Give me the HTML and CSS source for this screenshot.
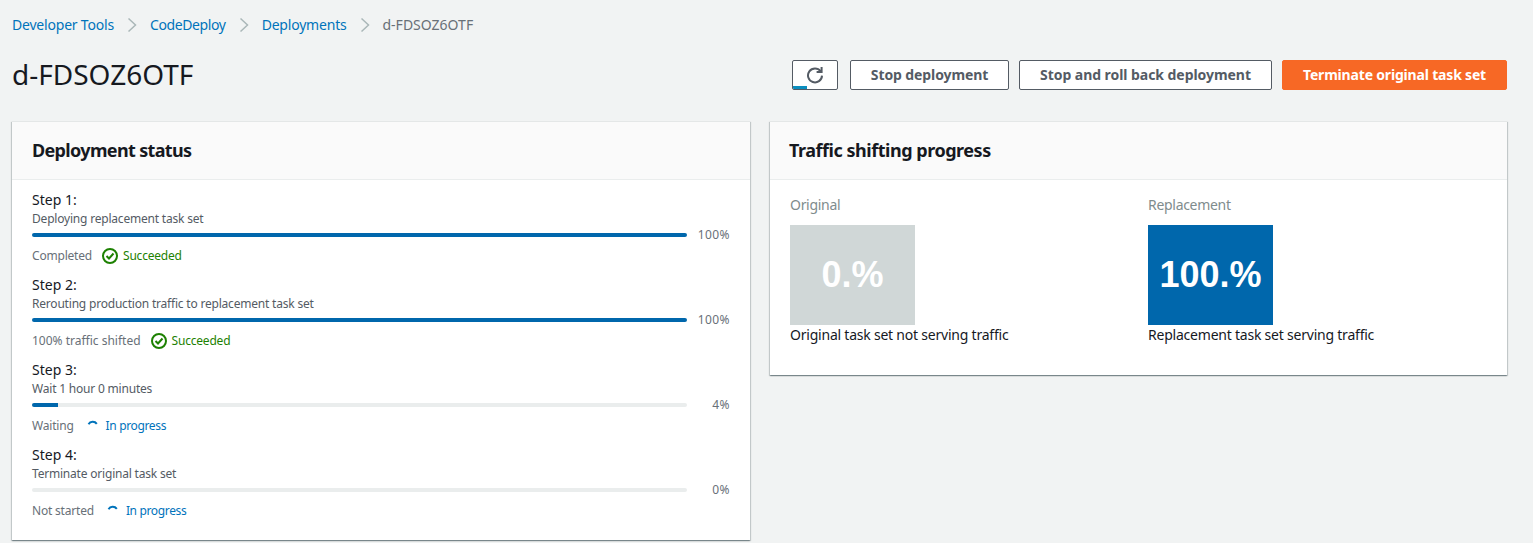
FILE: index.html

```html
<!DOCTYPE html>
<html lang="en">
<head>
    <meta charset="UTF-8">
    <meta name="viewport" content="width=device-width, initial-scale=1.0">
    <title>d-FDSOZ6OTF</title>
    <link rel="stylesheet" href="styles.css">
</head>
<body>
    <nav class="breadcrumbs">
        <a href="#">Developer Tools</a>
        <svg class="crumb-arrow" viewBox="0 0 10 16"><path d="M1.5 1.5 8.5 8l-7 6.5"/></svg>
        <a class="crumb-tight" href="#">CodeDeploy</a>
        <svg class="crumb-arrow" viewBox="0 0 10 16"><path d="M1.5 1.5 8.5 8l-7 6.5"/></svg>
        <a href="#">Deployments</a>
        <svg class="crumb-arrow" viewBox="0 0 10 16"><path d="M1.5 1.5 8.5 8l-7 6.5"/></svg>
        <span class="crumb-current">d-FDSOZ6OTF</span>
    </nav>

    <header class="page-header">
        <h1>d-FDSOZ6OTF</h1>
        <div class="actions">
            <button class="btn btn-refresh" aria-label="Refresh">
                <svg viewBox="0 0 18 18"><path d="M14.6 5.2A7 7 0 1 0 16 9.6"/><path d="M15.6 1v5H10.6"/></svg>
            </button>
            <button class="btn btn-stop">Stop deployment</button>
            <button class="btn btn-rollback">Stop and roll back deployment</button>
            <button class="btn btn-primary">Terminate original task set</button>
        </div>
    </header>

    <main class="columns">
        <section class="card">
            <h2 class="card-header">Deployment status</h2>
            <div class="card-body steps">
                <div class="step">
                    <div class="step-title">Step 1:</div>
                    <div class="step-desc">Deploying replacement task set</div>
                    <div class="progress">
                        <div class="track"><div class="fill" style="width: 100%"></div></div>
                        <span class="percent">100%</span>
                    </div>
                    <div class="status">
                        <span class="status-label">Completed</span>
                        <svg class="icon-ok" viewBox="0 0 16 16"><circle cx="8" cy="8" r="7"/><path d="M4.5 8 7 10.5 11.5 5.5"/></svg>
                        <span class="status-ok">Succeeded</span>
                    </div>
                </div>
                <div class="step">
                    <div class="step-title">Step 2:</div>
                    <div class="step-desc">Rerouting production traffic to replacement task set</div>
                    <div class="progress">
                        <div class="track"><div class="fill" style="width: 100%"></div></div>
                        <span class="percent">100%</span>
                    </div>
                    <div class="status">
                        <span class="status-label status-label-wide">100% traffic shifted</span>
                        <svg class="icon-ok" viewBox="0 0 16 16"><circle cx="8" cy="8" r="7"/><path d="M4.5 8 7 10.5 11.5 5.5"/></svg>
                        <span class="status-ok">Succeeded</span>
                    </div>
                </div>
                <div class="step">
                    <div class="step-title">Step 3:</div>
                    <div class="step-desc">Wait 1 hour 0 minutes</div>
                    <div class="progress">
                        <div class="track"><div class="fill" style="width: 4%"></div></div>
                        <span class="percent">4%</span>
                    </div>
                    <div class="status">
                        <span class="status-label">Waiting</span>
                        <svg class="icon-spin" viewBox="0 0 16 16"><path d="M3.5 6.2A5 5 0 0 1 11.8 5.8"/></svg>
                        <span class="status-progress">In progress</span>
                    </div>
                </div>
                <div class="step">
                    <div class="step-title">Step 4:</div>
                    <div class="step-desc">Terminate original task set</div>
                    <div class="progress">
                        <div class="track"><div class="fill" style="width: 0%"></div></div>
                        <span class="percent">0%</span>
                    </div>
                    <div class="status">
                        <span class="status-label">Not started</span>
                        <svg class="icon-spin" viewBox="0 0 16 16"><path d="M3.5 6.2A5 5 0 0 1 11.8 5.8"/></svg>
                        <span class="status-progress">In progress</span>
                    </div>
                </div>
            </div>
        </section>

        <section class="card card-traffic">
            <h2 class="card-header">Traffic shifting progress</h2>
            <div class="card-body traffic">
                <div class="traffic-col">
                    <div class="traffic-label">Original</div>
                    <div class="traffic-box box-off">0.%</div>
                    <div class="traffic-caption">Original task set not serving traffic</div>
                </div>
                <div class="traffic-col">
                    <div class="traffic-label">Replacement</div>
                    <div class="traffic-box box-on">100.%</div>
                    <div class="traffic-caption">Replacement task set serving traffic</div>
                </div>
            </div>
        </section>
    </main>
</body>
</html>
```

FILE: styles.css

```css
body {
    margin: 0;
    padding: 0 26px 3px 12px;
    background-color: #f1f3f3;
    color: #16191f;
    font-family: "Noto Sans", "Open Sans", sans-serif;
    font-size: 14px;
    line-height: 20px;
}

/* Breadcrumbs */
.breadcrumbs {
    display: flex;
    align-items: center;
    height: 20px;
    padding-top: 15px;
    font-size: 14px;
    letter-spacing: -0.2px;
}

.breadcrumbs a {
    color: #0073bb;
    text-decoration: none;
}

.breadcrumbs .crumb-tight {
    letter-spacing: -0.38px;
}

.crumb-arrow {
    width: 10px;
    height: 16px;
    margin: 0 13px;
    fill: none;
    stroke: #aab7b8;
    stroke-width: 1.5;
}

.crumb-current {
    color: #687078;
    letter-spacing: 0;
}

/* Title row */
.page-header {
    display: flex;
    align-items: center;
    justify-content: space-between;
    height: 30px;
    margin-top: 25px;
    margin-bottom: 31px;
}

h1 {
    margin: 0 0 2px;
    font-size: 28px;
    font-weight: 400;
    line-height: 36px;
}

.actions {
    display: flex;
}

.btn {
    height: 30px;
    margin-left: 10px;
    padding: 0 0 2px;
    border: 1px solid #545b64;
    border-radius: 2px;
    background-color: #fff;
    color: #545b64;
    font-family: inherit;
    font-size: 14px;
    font-weight: 700;
    letter-spacing: -0.1px;
}

.btn-refresh {
    position: relative;
    width: 46px;
    margin-left: 0;
    padding: 0;
    overflow: hidden;
}

/* the little strip along the bottom of the refresh button */
.btn-refresh::after {
    content: "";
    position: absolute;
    left: 0;
    bottom: 0;
    width: 14px;
    height: 3px;
    background-color: #0a8ebf;
}

.btn-refresh svg {
    display: block;
    width: 18px;
    height: 18px;
    margin: 0 auto;
    fill: none;
    stroke: #545b64;
    stroke-width: 2;
}

.btn-stop {
    width: 159px;
    margin-left: 12px;
}

.btn-rollback {
    width: 253px;
    letter-spacing: -0.05px;
}

.btn-primary {
    width: 225px;
    border-color: #f76825;
    background-color: #f76825;
    color: #fff;
    letter-spacing: -0.18px;
}

/* Cards */
.columns {
    display: grid;
    grid-template-columns: 738px 737px;
    gap: 20px;
    align-items: start;
}

.card {
    border-top: 1px solid #e4e7e7;
    background-color: #fff;
    box-shadow: 0 1px 1px 0 rgba(0, 28, 36, 0.3), 1px 1px 1px 0 rgba(0, 28, 36, 0.15), -1px 1px 1px 0 rgba(0, 28, 36, 0.15);
}

.card-header {
    margin: 0;
    padding: 17px 20px 18px;
    height: 22px;
    background-color: #fafafa;
    border-bottom: 1px solid #eaeded;
    font-size: 18px;
    font-weight: 700;
    line-height: 22px;
    letter-spacing: -0.65px;
}

.card-traffic .card-header {
    padding-left: 19px;
    letter-spacing: -0.47px;
}

/* Steps */
.steps {
    padding: 10px 20px;
}

.step {
    height: 85px;
}

.step-title {
    font-size: 14px;
    line-height: 20px;
}

.step-desc {
    padding-top: 1px;
    color: #545b64;
    font-size: 12px;
    line-height: 16px;
    letter-spacing: -0.2px;
}

.progress {
    display: flex;
    align-items: center;
    height: 16px;
}

.track {
    width: 655px;
    height: 4px;
    border-radius: 2px;
    background-color: #eaeded;
    overflow: hidden;
}

.fill {
    height: 100%;
    background-color: #0067ac;
}

.percent {
    width: 43px;
    color: #687078;
    font-size: 12px;
    line-height: 16px;
    letter-spacing: 0.4px;
    text-align: right;
}

.status {
    display: flex;
    align-items: center;
    height: 24px;
    margin-top: 1px;
    font-size: 12px;
    letter-spacing: -0.2px;
}

.status-label {
    margin-right: 10px;
    color: #687078;
}

.status-label-wide {
    letter-spacing: 0;
}

.icon-ok {
    width: 16px;
    height: 16px;
    margin-right: 5px;
    fill: none;
    stroke: #1d8102;
    stroke-width: 2;
}

.status-ok {
    color: #1d8102;
}

.icon-spin {
    width: 16px;
    height: 16px;
    margin-left: 1px;
    margin-right: 5px;
    fill: none;
    stroke: #0073bb;
    stroke-width: 2;
}

.status-progress {
    color: #0073bb;
    letter-spacing: -0.35px;
}

/* Traffic */
.traffic {
    display: grid;
    grid-template-columns: 1fr 1fr;
    gap: 19px;
    padding: 15px 20px 30px;
}

.traffic-label {
    margin-bottom: 10px;
    color: #7f8c8d;
    font-size: 14px;
    line-height: 20px;
    letter-spacing: -0.3px;
}

.traffic-box {
    display: flex;
    align-items: center;
    justify-content: center;
    width: 125px;
    height: 100px;
    color: #fff;
    font-family: "Liberation Sans", Arial, sans-serif;
    font-size: 36px;
    font-weight: 700;
}

.box-off {
    background-color: #d0d7d7;
}

.box-on {
    background-color: #0067ac;
}

.traffic-caption {
    letter-spacing: -0.22px;
}
```
